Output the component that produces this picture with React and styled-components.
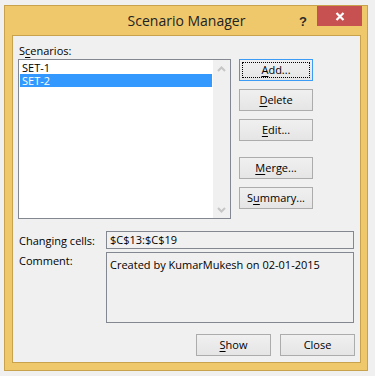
import React from 'react';
import styled, { createGlobalStyle } from 'styled-components';

const GlobalStyle = createGlobalStyle`
  html, body {
    margin: 0;
    padding: 0;
    background: #f0f0f0;
  }
  body {
    font-family: "Open Sans", "Noto Sans", sans-serif;
    font-size: 11px;
    color: #000;
  }
`;

const Screen = styled.div`
  width: 375px;
  height: 376px;
  padding: 5px 0 0 4px;
  box-sizing: border-box;
  overflow: hidden;
`;

const Window = styled.div`
  width: 364px;
  box-sizing: border-box;
  border: 1px solid #c9a24e;
  background: #f0c86c;
  padding: 0 6px 7px 7px;
`;

const TitleBar = styled.div`
  height: 29px;
  display: grid;
  grid-template-columns: 1fr auto 1fr;
  align-items: start;
`;

const Title = styled.div`
  grid-column: 2;
  font-size: 14px;
  line-height: 30px;
  color: #222;
  white-space: nowrap;
`;

const Controls = styled.div`
  grid-column: 3;
  justify-self: end;
  display: flex;
  align-items: flex-start;
  margin-right: -1px;
`;

const Help = styled.span`
  font-family: "Liberation Sans", Arial, sans-serif;
  font-weight: 700;
  font-size: 13px;
  line-height: 13px;
  color: #2b2b2b;
  margin: 9px 10px 0 0;
`;

const CloseBtn = styled.div`
  width: 45px;
  height: 20px;
  background: #c75050;
  display: flex;
  align-items: center;
  justify-content: center;
`;

const Body = styled.div`
  border: 1px solid #c9a24e;
  background: #f0f0f0;
  padding: 7px 5px 6px 5px;
  display: flex;
  flex-direction: column;
`;

const Label = styled.div`
  line-height: 15px;
  padding-left: 1px;
  margin-bottom: 1px;
`;

const Key = styled.span`
  text-decoration: underline;
  text-underline-offset: 2px;
`;

const TopRow = styled.div`
  display: flex;
  align-items: flex-start;
  gap: 8px;
`;

const ListBox = styled.div`
  width: 213px;
  height: 160px;
  box-sizing: border-box;
  border: 1px solid #828790;
  background: #fff;
  display: flex;
`;

const Items = styled.div`
  flex: 1;
  padding: 1px;
`;

const Item = styled.div`
  height: 13px;
  line-height: 13px;
  padding-left: 2px;
  background: ${(p) => (p.$selected ? '#3399ff' : 'transparent')};
  color: ${(p) => (p.$selected ? '#fff' : '#000')};
`;

const ScrollBar = styled.div`
  width: 17px;
  background: #f0f0f0;
  display: flex;
  flex-direction: column;
  justify-content: space-between;
`;

const ScrollArrow = styled.div`
  height: 17px;
  display: flex;
  align-items: center;
  justify-content: center;
`;

const ButtonStack = styled.div`
  display: flex;
  flex-direction: column;
  gap: 8px;
`;

const Button = styled.div`
  position: relative;
  width: ${(p) => p.$width || 74}px;
  height: 22px;
  box-sizing: border-box;
  border: 1px solid ${(p) => (p.$default ? '#3c9cf5' : '#acacac')};
  background: linear-gradient(#f0f0f0, #e5e5e5);
  display: flex;
  align-items: center;
  justify-content: center;
  line-height: 20px;
  margin-top: ${(p) => (p.$spaced ? 8 : 0)}px;
`;

const FocusRing = styled.span`
  position: absolute;
  inset: 2px;
  border: 1px dotted #000;
  pointer-events: none;
`;

const Fields = styled.div`
  margin-top: 12px;
  display: grid;
  grid-template-columns: 88px 248px;
  row-gap: 3px;
  align-items: center;
`;

const FieldLabel = styled.div`
  padding-left: 1px;
  align-self: ${(p) => (p.$top ? 'start' : 'center')};
  padding-top: ${(p) => (p.$top ? 1 : 0)}px;
  line-height: 15px;
`;

const Field = styled.div`
  height: ${(p) => p.$height}px;
  box-sizing: border-box;
  border: 1px solid #828790;
  padding: ${(p) => (p.$multi ? '4px 3px' : '0 3px')};
  line-height: 16px;
  color: #000;
`;

const Footer = styled.div`
  margin-top: 11px;
  display: flex;
  justify-content: flex-end;
  gap: 9px;
`;

const Chevron = ({ up }) => (
  <svg width="9" height="6" viewBox="0 0 9 6">
    <polyline
      points={up ? '1,5 4.5,1.5 8,5' : '1,1 4.5,4.5 8,1'}
      fill="none"
      stroke="#c6c6c6"
      strokeWidth="2"
    />
  </svg>
);

const App = () => (
  <Screen>
    <GlobalStyle />
    <Window>
      <TitleBar>
        <Title>Scenario Manager</Title>
        <Controls>
          <Help>?</Help>
          <CloseBtn>
            <svg width="10" height="9" viewBox="0 0 10 9">
              <path d="M1.5 1 L8.5 8 M8.5 1 L1.5 8" stroke="#fff" strokeWidth="2.2" />
            </svg>
          </CloseBtn>
        </Controls>
      </TitleBar>
      <Body>
        <Label>
          S<Key>c</Key>enarios:
        </Label>
        <TopRow>
          <ListBox>
            <Items>
              <Item>SET-1</Item>
              <Item $selected>SET-2</Item>
            </Items>
            <ScrollBar>
              <ScrollArrow>
                <Chevron up />
              </ScrollArrow>
              <ScrollArrow>
                <Chevron />
              </ScrollArrow>
            </ScrollBar>
          </ListBox>
          <ButtonStack>
            <Button $default>
              <FocusRing />
              <span>
                <Key>A</Key>dd...
              </span>
            </Button>
            <Button>
              <span>
                <Key>D</Key>elete
              </span>
            </Button>
            <Button>
              <span>
                <Key>E</Key>dit...
              </span>
            </Button>
            <Button $spaced>
              <span>
                <Key>M</Key>erge...
              </span>
            </Button>
            <Button>
              <span>
                S<Key>u</Key>mmary...
              </span>
            </Button>
          </ButtonStack>
        </TopRow>
        <Fields>
          <FieldLabel>Changing cells:</FieldLabel>
          <Field $height={18}>$C$13:$C$19</Field>
          <FieldLabel $top>Comment:</FieldLabel>
          <Field $height={71} $multi>
            Created by KumarMukesh on 02-01-2015
          </Field>
        </Fields>
        <Footer>
          <Button $width={75}>
            <span>
              <Key>S</Key>how
            </span>
          </Button>
          <Button $width={75}>Close</Button>
        </Footer>
      </Body>
    </Window>
  </Screen>
);

export default App;
